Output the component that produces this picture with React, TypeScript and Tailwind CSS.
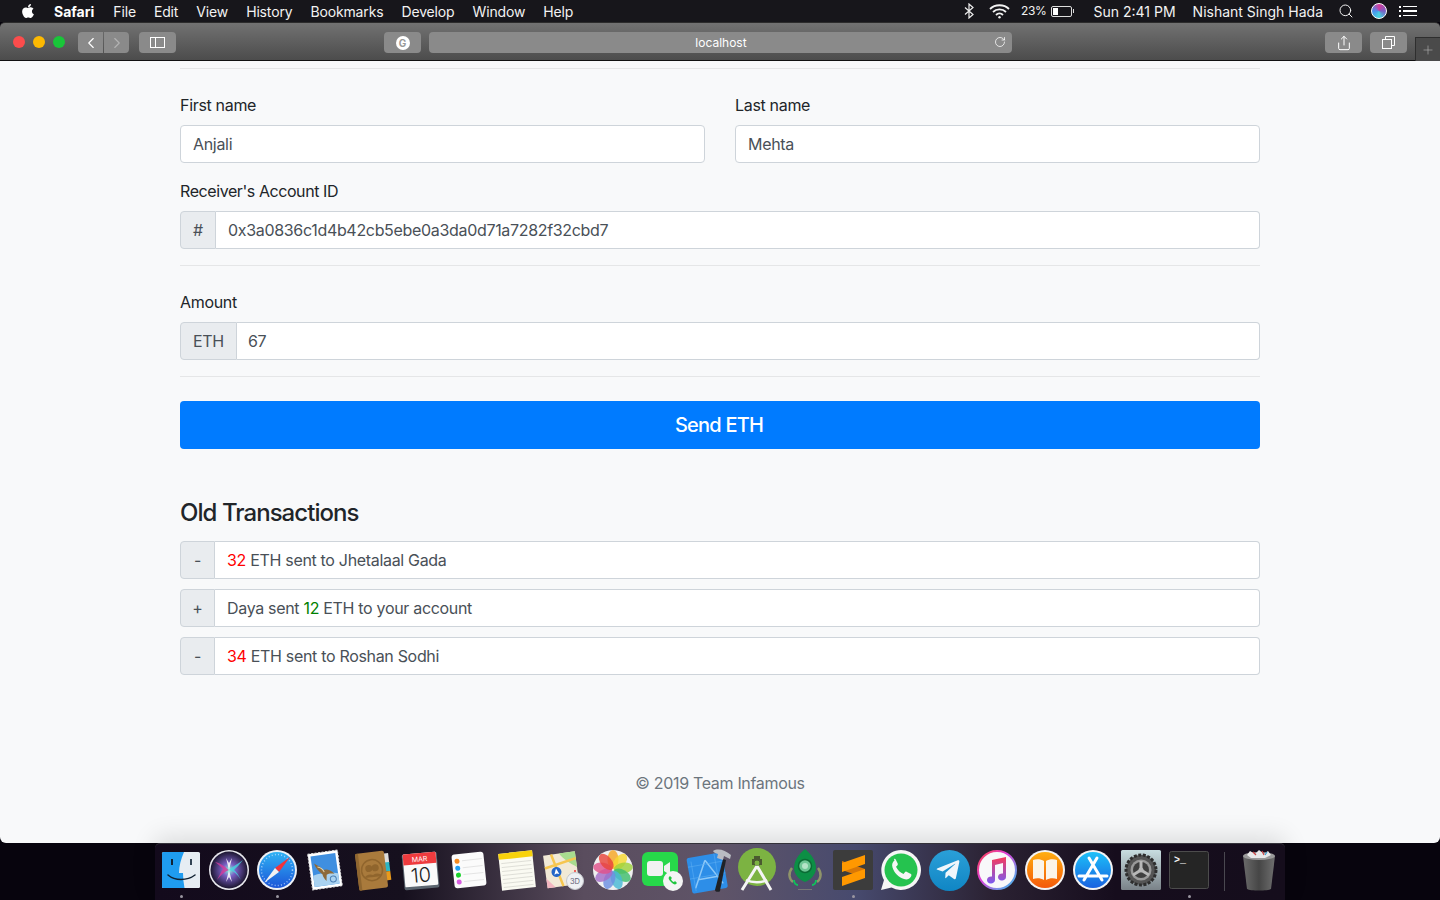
import React from "react";
import { FaApple, FaTelegramPlane } from "react-icons/fa";
import { Search, RotateCw, Share, ChevronLeft, ChevronRight, Plus } from "lucide-react";

const S = ({ children }: { children: React.ReactNode }) => (
  <svg width="48" height="48" viewBox="0 0 48 48" className="block">{children}</svg>
);

const Finder = () => (
  <S>
    <rect x="5" y="6" width="38" height="36" rx="1.5" fill="#e6edf3" />
    <path d="M6.500 6H27c-3 7-5 14-5 21h4c0 5 .5 10 1.500 15H6.500A1.500 1.500 0 0 1 5 40.500v-33A1.500 1.500 0 0 1 6.500 6z" fill="#1f9cf0" />
    <rect x="14" y="13" width="2" height="6" fill="#123" />
    <rect x="33" y="13" width="2" height="6" fill="#345" />
    <path d="M11 29c7 6 19 6 27 0" fill="none" stroke="#123" strokeWidth="1.500" strokeLinecap="round" />
  </S>
);
const Siri = () => (
  <S>
    <defs>
      <radialGradient id="sg"><stop offset="0" stopColor="#8fd" /><stop offset=".35" stopColor="#7a5fc4" /><stop offset="1" stopColor="#1c1630" /></radialGradient>
    </defs>
    <circle cx="24" cy="24" r="20" fill="#e8e8ee" />
    <circle cx="24" cy="24" r="18.500" fill="url(#sg)" />
    <path d="M10 16c8 2 11 6 14 8-5 2-9 6-12 10 3-6 5-10 6-11-2-2-5-5-8-7z" fill="#d43a9a" opacity=".8" />
    <path d="M38 14c-5 4-10 6-14 10 5 1 9 5 12 10-4-8-6-9-7-10 3-3 6-6 9-10z" fill="#46d6e0" opacity=".8" />
    <path d="M24 24l-3 12 3-5 3 5z M24 24l-3-12 3 5 3-5z" fill="#fff" opacity=".85" />
  </S>
);
const Safari = () => (
  <S>
    <defs>
      <linearGradient id="sf" x1="0" y1="0" x2="0" y2="1"><stop offset="0" stopColor="#2fb2f4" /><stop offset="1" stopColor="#1b55d8" /></linearGradient>
    </defs>
    <circle cx="24" cy="24" r="20" fill="#eef1f5" />
    <circle cx="24" cy="24" r="18" fill="url(#sf)" />
    <circle cx="24" cy="24" r="15.500" fill="none" stroke="#cfe6ff" strokeWidth="1.500" strokeDasharray="1 2.200" opacity=".7" />
    <path d="M37 11L22 22l4 4z" fill="#f2333a" />
    <path d="M11 37l15-11-4-4z" fill="#f2f2f2" />
  </S>
);
const Mail = () => (
  <S>
    <g transform="rotate(-8 24 24)">
      <rect x="9" y="6" width="30" height="36" fill="#fff" stroke="#ddd" strokeDasharray="2 1.500" strokeWidth="1" />
      <rect x="11.500" y="8.500" width="25" height="31" fill="#3f8fe0" />
      <path d="M11.500 28c8-2 17-1 25 1v10.500h-25z" fill="#a9d2f0" />
      <path d="M14 16c4 3 7 5 8 8 3-1 7 0 11 5-4-1-6-1-8 0l-1 6c-2-3-3-5-3-7-3-3-6-7-7-12z" fill="#8d6a3a" />
      <path d="M17 20c3 1 5 3 6 6" stroke="#e8d9b0" strokeWidth="1" fill="none" />
      <circle cx="31" cy="34" r="3" fill="none" stroke="#4a7fb5" />
    </g>
  </S>
);
const Contacts = () => (
  <S>
    <g transform="rotate(-7 24 24)">
      <rect x="35" y="9" width="6" height="10" fill="#ddd" />
      <rect x="36" y="18" width="5" height="9" fill="#2db6c6" />
      <rect x="36" y="27" width="5" height="9" fill="#e89a1d" />
      <rect x="8" y="6" width="29" height="37" rx="2" fill="#a97a3c" />
      <rect x="8" y="6" width="3" height="37" rx="1" fill="#8f6630" />
      <circle cx="23" cy="24" r="10.500" fill="none" stroke="#90652d" strokeWidth="1.500" />
      <circle cx="20" cy="22" r="3.500" fill="#90652d" />
      <circle cx="26.500" cy="22" r="3.500" fill="#90652d" />
      <path d="M15 31c1-4 9-4 10 0zM22 31c1-4 9-4 10 0z" fill="#90652d" />
    </g>
  </S>
);
const Calendar = () => (
  <S>
    <g transform="rotate(-5 24 24)">
      <rect x="6" y="7" width="35" height="36" rx="2" fill="#5c6670" />
      <rect x="7" y="7" width="33" height="33" rx="1" fill="#fafafa" />
      <path d="M7 8a1 1 0 0 1 1-1h31a1 1 0 0 1 1 1v10H7z" fill="#ee3b3e" />
      <text x="23.500" y="15.500" textAnchor="middle" fontSize="7" fill="#fff" fontFamily="Inter, sans-serif">MAR</text>
      <text x="23.500" y="36" textAnchor="middle" fontSize="20" fill="#222" fontFamily="Inter, sans-serif" fontWeight="300">10</text>
    </g>
  </S>
);
const Reminders = () => (
  <S>
    <g transform="rotate(-6 24 24)">
      <rect x="8" y="7" width="32" height="34" rx="3" fill="#fbfbfb" />
      <path d="M18 14h20M18 21h20M18 28h20M18 35h20" stroke="#e4e4e4" strokeWidth="1" />
      <circle cx="13" cy="14" r="2.500" fill="#f58a1f" />
      <circle cx="13" cy="21" r="2.500" fill="#1d9df3" />
      <circle cx="13" cy="28" r="2.500" fill="#19d22b" />
      <circle cx="13" cy="35" r="2.500" fill="#d85fe0" />
    </g>
  </S>
);
const Notes = () => (
  <S>
    <g transform="rotate(-6 24 24)">
      <rect x="7" y="6" width="34" height="37" fill="#fafaf2" />
      <rect x="7" y="6" width="34" height="6" fill="#f8d20c" />
      <path d="M9 16h30M9 20h30M9 24h30M9 28h30M9 32h30M9 36h30M9 40h30" stroke="#d9d9d2" strokeWidth=".8" />
    </g>
  </S>
);
const Maps = () => (
  <S>
    <g transform="rotate(-8 22 22)">
      <rect x="4" y="7" width="32" height="33" fill="#f1e9d6" />
      <path d="M20 7h16v16C30 18 24 14 20 7z" fill="#a8dc8f" />
      <path d="M4 30l8 10H4z" fill="#f2b5c0" />
      <path d="M12 7l8 33M4 20l32-6" stroke="#f6c64f" strokeWidth="2.500" />
      <circle cx="15" cy="25" r="5" fill="#2467c8" />
      <path d="M15 21.500l2.500 6-2.500-1-2.500 1z" fill="#fff" />
    </g>
    <circle cx="34" cy="35" r="8.500" fill="#eef0f3" stroke="#c5c8cd" />
    <text x="34" y="38" textAnchor="middle" fontSize="7.500" fill="#667" fontFamily="Inter, sans-serif">3D</text>
    <circle cx="34" cy="25" r="1" fill="#e33" />
  </S>
);
const Photos = () => {
  const c = ["#f5a623", "#f7d830", "#9ed23a", "#3ebd6c", "#48b8d4", "#6c8fe0", "#a46cc8", "#e0508a", "#e8443a"];
  return (
    <S>
      <circle cx="24" cy="24" r="20" fill="#f0f0f0" />
      {c.map((col, i) => (
        <ellipse key={col} cx="24" cy="13.500" rx="5.500" ry="9.500" fill={col} opacity=".82" transform={`rotate(${i * 40} 24 24)`} />
      ))}
    </S>
  );
};
const FaceTime = () => (
  <S>
    <rect x="5" y="6" width="36" height="34" rx="6" fill="#27d84a" />
    <rect x="10" y="15" width="16" height="15" rx="3" fill="#f1f1f1" />
    <path d="M27 20l6-4v13l-6-4z" fill="#f1f1f1" />
    <circle cx="36" cy="35" r="10" fill="#f4f4f4" />
    <path d="M32 31c-1 1 0 3 2 5s4 3 5 2l1-1-2-2-1 1c-1 0-3-2-3-3l1-1-2-2z" fill="#1fc63e" />
  </S>
);
const Xcode = () => (
  <S>
    <g transform="rotate(-10 22 26)">
      <rect x="4" y="9" width="36" height="36" rx="2" fill="#2d8ee8" />
      <path d="M8 40L22 14M36 40L22 14M12 32h20" stroke="#8cc8f8" strokeWidth="1.500" fill="none" />
      <path d="M8 13v30M4 18h36M4 30h36M32 9v36" stroke="#5fb0f4" strokeWidth=".5" />
    </g>
    <path d="M30 44l8-31 3 1-6 31c-1 1.500-5 1-5-1z" fill="#1f2226" />
    <path d="M28 5c5-3 12-1 18 4l-1 4-6-3-1 4-6-2 1-4c-2-1-4-1-5-3z" fill="#b9bcc2" />
  </S>
);
const AndroidStudio = () => (
  <S>
    <circle cx="24" cy="21" r="19" fill="#7cb342" />
    <path d="M21 10h6v3h2v6h-10v-6h2z" fill="#4a5a30" />
    <circle cx="24" cy="17" r="3" fill="#7cb342" stroke="#4a5a30" />
    <path d="M24 20L9 44M24 20l14 24" stroke="#f5f5f5" strokeWidth="3" fill="none" />
    <path d="M13 34c6 3 16 3 21 0" stroke="#f5f5f5" strokeWidth="2.500" fill="none" />
  </S>
);
const Rocket = () => (
  <S>
    <path d="M24 3c7 6 11 12 11 19 0 6-5 12-11 14-6-2-11-8-11-14 0-7 4-13 11-19z" fill="#0c8f45" />
    <circle cx="24" cy="20" r="6.500" fill="#6fc695" stroke="#0b6b34" strokeWidth="1.500" />
    <circle cx="24" cy="20" r="3" fill="#b4e4c7" />
    <path d="M11 22c-4 5-3 11 1 14M37 22c4 5 3 11-1 14" stroke="#8f9469" strokeWidth="2.500" fill="none" />
    <path d="M13 34c0 3 2 5 4 5M35 34c0 3-2 5-4 5" stroke="#0ec25c" strokeWidth="2" fill="none" />
    <rect x="17" y="43" width="14" height="1" fill="#777" />
  </S>
);
const Sublime = () => (
  <S>
    <rect x="4" y="4" width="40" height="40" rx="2" fill="#3c3c3c" />
    <path d="M13 15l23 8v9l-23-8z" fill="#d97706" />
    <path d="M36 9L13 17v9l23-8z" fill="#ff9800" />
    <path d="M36 23L13 31v9l23-8z" fill="#ff9800" />
  </S>
);
const Whatsapp = () => (
  <S>
    <path d="M24 4a20 20 0 1 1-9.500 37.600L4 44l3-10A20 20 0 0 1 24 4z" fill="#f6f6f6" />
    <circle cx="24" cy="24" r="16.500" fill="#25c34f" />
    <path d="M17.500 14.500c-2 1.500-3 4-2 7 1.500 5 6 10 11.500 11.500 3 1 5.500 0 7-2.500.5-1 .5-2 0-2.500l-4.500-2.300c-.7-.3-1.200 0-1.600.5l-1.400 1.800c-3-1-6-4-7.500-7.200l1.500-1.600c.4-.5.5-1 .2-1.600l-2-4.200c-.4-.7-1.200-.7-1.700-.2z" fill="#f6f6f6" />
  </S>
);
const Telegram = () => (
  <div className="w-12 h-12 flex items-center justify-center">
    <div className="w-[41px] h-[41px] rounded-full bg-gradient-to-b from-[#2a9fd8] to-[#0f86c4] flex items-center justify-center">
      <FaTelegramPlane className="text-[#f0f6fb] mr-[3px]" size={26} />
    </div>
  </div>
);
const Itunes = () => (
  <S>
    <defs>
      <linearGradient id="it" x1="0" y1="0" x2="1" y2="1"><stop offset="0" stopColor="#f44" /><stop offset=".4" stopColor="#e03ed8" /><stop offset="1" stopColor="#35c8f0" /></linearGradient>
      <linearGradient id="nt" x1="0" y1="0" x2="0" y2="1"><stop offset="0" stopColor="#f73a5c" /><stop offset="1" stopColor="#7a5cf0" /></linearGradient>
    </defs>
    <circle cx="24" cy="24" r="19" fill="#f8f8fa" stroke="url(#it)" strokeWidth="2" />
    <path d="M19 14l14-3v20a4 3.500 0 1 1-3-3.400V17l-8 2v15a4 3.500 0 1 1-3-3.400z" fill="url(#nt)" />
  </S>
);
const Books = () => (
  <S>
    <defs>
      <linearGradient id="bk" x1="0" y1="0" x2="0" y2="1"><stop offset="0" stopColor="#ffae10" /><stop offset="1" stopColor="#f4590a" /></linearGradient>
    </defs>
    <circle cx="24" cy="24" r="20" fill="#f4f4f4" />
    <circle cx="24" cy="24" r="18" fill="url(#bk)" />
    <path d="M23 15c-3-2-8-2-11-1v19c3-1 8-1 11 1zM25 15c3-2 8-2 11-1v19c-3-1-8-1-11 1z" fill="#fbf5ea" />
  </S>
);
const AppStore = () => (
  <S>
    <defs>
      <linearGradient id="as" x1="0" y1="0" x2="0" y2="1"><stop offset="0" stopColor="#1cc0f8" /><stop offset="1" stopColor="#1a62e0" /></linearGradient>
    </defs>
    <circle cx="24" cy="24" r="20" fill="#f4f4f4" />
    <circle cx="24" cy="24" r="18" fill="url(#as)" />
    <path d="M20 12l13 22M28 12L15 34M10 30h28" stroke="#fff" strokeWidth="3" strokeLinecap="round" fill="none" />
  </S>
);
const Prefs = () => (
  <S>
    <defs>
      <linearGradient id="pr" x1="0" y1="0" x2="0" y2="1"><stop offset="0" stopColor="#c8dde0" /><stop offset="1" stopColor="#7a8288" /></linearGradient>
    </defs>
    <rect x="4" y="4" width="40" height="40" rx="1.500" fill="url(#pr)" />
    <circle cx="24" cy="24" r="15" fill="#555" stroke="#2e2e2e" strokeWidth="3" strokeDasharray="3 1.500" />
    <circle cx="24" cy="24" r="10.500" fill="#9a9a9a" />
    <circle cx="24" cy="24" r="8" fill="#3f3f3f" />
    <path d="M24 24V15M24 24l8 5M24 24l-8 5" stroke="#b8b8b8" strokeWidth="3" />
    <circle cx="24" cy="24" r="2.500" fill="#b8b8b8" />
  </S>
);
const Terminal = () => (
  <S>
    <rect x="4.500" y="5.500" width="39" height="37" rx="2" fill="#252525" stroke="#4c4c4c" />
    <text x="9" y="17" fontSize="10" fontWeight="700" fill="#f2f2f2" fontFamily="Liberation Mono, monospace">&gt;_</text>
  </S>
);
const Trash = () => (
  <S>
    <defs>
      <linearGradient id="tr" x1="0" y1="0" x2="1" y2="0"><stop offset="0" stopColor="#6a6a6a" /><stop offset=".5" stopColor="#464646" /><stop offset="1" stopColor="#6f6f6f" /></linearGradient>
    </defs>
    <path d="M8 10h32l-4 33c-3 2-21 2-24 0z" fill="url(#tr)" />
    <ellipse cx="24" cy="10" rx="16" ry="4" fill="#9a9a9a" />
    <path d="M12 9l3-4 5 3 4-4 5 4 4-3 3 4-6 3H16z" fill="#e9e9e9" />
    <path d="M18 6l3 3M27 5l2 4" stroke="#c44" strokeWidth="1.200" />
    <path d="M32 6l-2 3" stroke="#39c" strokeWidth="1.200" />
  </S>
);

const dockItems: { c: React.ReactNode; dot?: boolean }[] = [
  { c: <Finder />, dot: true },
  { c: <Siri /> },
  { c: <Safari />, dot: true },
  { c: <Mail /> },
  { c: <Contacts /> },
  { c: <Calendar /> },
  { c: <Reminders /> },
  { c: <Notes /> },
  { c: <Maps /> },
  { c: <Photos /> },
  { c: <FaceTime /> },
  { c: <Xcode /> },
  { c: <AndroidStudio /> },
  { c: <Rocket /> },
  { c: <Sublime />, dot: true },
  { c: <Whatsapp /> },
  { c: <Telegram /> },
  { c: <Itunes /> },
  { c: <Books /> },
  { c: <AppStore /> },
  { c: <Prefs /> },
  { c: <Terminal />, dot: true },
];

const DockSlot = ({ children, dot }: { children: React.ReactNode; dot?: boolean }) => (
  <div className="w-12 shrink-0 flex flex-col items-center">
    {children}
    {dot && <div className="w-[3px] h-[3px] mt-[1px] rounded-full bg-[#9a96a0]" />}
  </div>
);

const menus = ["File", "Edit", "View", "History", "Bookmarks", "Develop", "Window", "Help"];

const btn = "h-[21px] bg-[#8a8a8a] rounded-[4px] flex items-center justify-center shrink-0";
const inputCls = "h-[38px] w-full bg-white border border-[#ced4da] rounded-[4px] px-[12px] text-[16px] text-[#495057] outline-none";
const hr = "border-t border-[#e5e6e7]";
const prepend = "h-[38px] bg-[#e9ecef] border border-[#ced4da] rounded-l-[4px] flex items-center justify-center text-[16px] text-[#495057] shrink-0";

const TxRow = ({ sign, children }: { sign: string; children: React.ReactNode }) => (
  <div className="flex">
    <div className={prepend + " w-[35px]"}>{sign}</div>
    <div className="h-[38px] flex-1 bg-white border border-l-0 border-[#ced4da] rounded-r-[4px] pl-[12px] flex items-center text-[16px] text-[#495057]">
      <span>{children}</span>
    </div>
  </div>
);

const ListRow = () => (
  <div className="w-full flex justify-between items-center">
    <div className="w-[2px] h-[2px] bg-white" />
    <div className="w-[14px] h-[1.5px] bg-white" />
  </div>
);

export default function App() {
  return (
    <div className="w-[1440px] h-[900px] overflow-hidden flex flex-col bg-[#07040d] font-['Inter',sans-serif]">
      <div className="h-[22px] bg-[#17161b] flex items-center text-[14px] text-[#f2f2f2] shrink-0">
        <FaApple className="ml-[20px] text-white" size={16} />
        <span className="ml-[18px] font-bold text-white">Safari</span>
        <div className="flex gap-[18px] ml-[19px] tracking-[-0.15px]">
          {menus.map((m) => (
            <span key={m}>{m}</span>
          ))}
        </div>
        <div className="ml-auto flex items-center">
          <svg width="10" height="16" viewBox="0 0 10 16" fill="none" stroke="#eee" strokeWidth="1.200">
            <path d="M1 4.500l8 7-4 3.500V1l4 3.500-8 7" />
          </svg>
          <svg width="21" height="15" viewBox="0 0 21 15" className="ml-[15px]" fill="none" stroke="#f2f2f2" strokeWidth="1.800">
            <path d="M1 5c5-5 14-5 19 0M4 8c3.500-3.500 9.500-3.500 13 0M7 11c2-2 5-2 7 0" />
            <circle cx="10.500" cy="13.300" r="1.200" fill="#f2f2f2" stroke="none" />
          </svg>
          <span className="ml-[11px] text-[12px] tracking-[-0.3px]">23%</span>
          <div className="ml-[4px] w-[21px] h-[11px] border border-[#ddd] rounded-[2px] p-[1px] shrink-0">
            <div className="w-[5px] h-full bg-white" />
          </div>
          <div className="w-[1px] h-[4px] bg-[#ddd] ml-[1px]" />
          <span className="ml-[20px]">Sun 2:41 PM</span>
          <span className="ml-[17px]">Nishant Singh Hada</span>
          <Search className="ml-[15px]" size={16} strokeWidth={1.5} />
          <div className="ml-[17px] w-[16px] h-[16px] rounded-full bg-[conic-gradient(#d43a9a,#7a5fc4,#46d6e0,#4a90f0,#d43a9a)] border border-white" />
          <div className="ml-[12px] mr-[23px] w-[18px] flex flex-col gap-[2.5px]">
            <ListRow />
            <ListRow />
            <ListRow />
          </div>
        </div>
      </div>

      <div className="h-[39px] shrink-0 bg-gradient-to-b from-[#727272] to-[#4c4c4c] border-t border-[#2c2c2c] border-b-[#111] border-b rounded-t-[5px] flex pt-[9px] text-white">
        <div className="w-[12px] h-[12px] rounded-full bg-[#fc4c4c] ml-[13px] mt-[4px]" />
        <div className="w-[12px] h-[12px] rounded-full bg-[#fdb901] ml-[8px] mt-[4px]" />
        <div className="w-[12px] h-[12px] rounded-full bg-[#19c639] ml-[8px] mt-[4px]" />
        <div className={btn + " w-[25px] ml-[13px] rounded-r-none"}>
          <ChevronLeft size={18} strokeWidth={1.5} />
        </div>
        <div className={btn + " w-[25px] ml-[1px] rounded-l-none"}>
          <ChevronRight size={18} strokeWidth={1.5} className="text-[#b3b3b3]" />
        </div>
        <div className={btn + " w-[37px] ml-[10px]"}>
          <div className="w-[15px] h-[11px] border border-white flex">
            <div className="w-[5px] border-r border-white" />
          </div>
        </div>
        <div className={btn + " w-[37px] ml-[208px]"}>
          <div className="w-[14px] h-[14px] rounded-full bg-white flex items-center justify-center text-[10px] font-bold text-[#999] leading-none">G</div>
        </div>
        <div className={btn + " w-[583px] ml-[8px] relative text-[12px]"}>
          <span className="ml-[1px]">localhost</span>
          <RotateCw size={12} strokeWidth={1.5} className="absolute right-[6px] top-[4px]" />
        </div>
        <div className={btn + " w-[37px] ml-[313px]"}>
          <Share size={16} strokeWidth={1.5} />
        </div>
        <div className={btn + " w-[37px] ml-[8px]"}>
          <svg width="13" height="13" viewBox="0 0 13 13" fill="none" stroke="#fff" strokeWidth="1">
            <rect x=".5" y="3.500" width="9" height="9" />
            <path d="M3.500 3.500v-3h9v9h-3" />
          </svg>
        </div>
        <div className="w-[25px] h-[24px] ml-[8px] mt-[5px] bg-[#4a4a4a] border-l border-t border-[#2e2e2e] flex items-center justify-center">
          <Plus size={14} strokeWidth={1} className="text-[#bbb]" />
        </div>
      </div>

      <div className="flex-1 min-h-0 bg-[#f8f9fa] rounded-b-[6px] text-[#212529] text-[16px] tracking-[-0.32px]">
        <div className="w-[1080px] mx-auto pt-[7px]">
          <div className={hr} />
          <div className="flex gap-[30px] mt-[24px]">
            <div className="flex-1">
              <label className="block h-[24px] leading-[24px] mb-[8px]">First name</label>
              <input className={inputCls} readOnly value="Anjali" />
            </div>
            <div className="flex-1">
              <label className="block h-[24px] leading-[24px] mb-[8px]">Last name</label>
              <input className={inputCls} readOnly value="Mehta" />
            </div>
          </div>
          <label className="block h-[24px] leading-[24px] mt-[16px] mb-[8px] tracking-[-0.42px]">Receiver's Account ID</label>
          <div className="flex">
            <div className={prepend + " w-[36px]"}>#</div>
            <input className={inputCls + " rounded-l-none border-l-0 flex-1"} readOnly value="0x3a0836c1d4b42cb5ebe0a3da0d71a7282f32cbd7" />
          </div>
          <div className={hr + " mt-[16px]"} />
          <label className="block h-[24px] leading-[24px] mt-[24px] mb-[8px]">Amount</label>
          <div className="flex">
            <div className={prepend + " w-[57px]"}>ETH</div>
            <input className={inputCls + " rounded-l-none border-l-0 flex-1 pl-[11px]"} readOnly value="67" />
          </div>
          <div className={hr + " mt-[16px]"} />
          <button className="mt-[24px] w-full h-[48px] bg-[#007bff] rounded-[4px] text-white text-[20px] font-medium tracking-[-0.8px] pr-[2px]">Send ETH</button>
          <h4 className="mt-[49px] text-[24px] leading-[29px] font-medium tracking-[-0.95px]">Old Transactions</h4>
          <div className="mt-[14px] flex flex-col gap-[10px]">
            <TxRow sign="-"><span className="text-[#ff0000]">32</span> ETH sent to Jhetalaal Gada</TxRow>
            <TxRow sign="+">Daya sent <span className="text-[#008000]">12</span> ETH to your account</TxRow>
            <TxRow sign="-"><span className="text-[#ff0000]">34</span> ETH sent to Roshan Sodhi</TxRow>
          </div>
          <p className="mt-[96px] text-center text-[#6c757d] leading-[24px]">© 2019 Team Infamous</p>
        </div>
      </div>

      <div className="h-[57px] shrink-0 bg-[#07040d] flex justify-center">
        <div className="w-[1130px] h-[57px] flex px-[2px] pt-[2px] rounded-t-[5px] border-t border-[#34323a] shadow-[0_-6px_24px_rgba(0,0,0,0.12)] bg-[linear-gradient(90deg,#130a1c_0%,#16101e_22%,#5a4d5e_38%,#5f5468_50%,#474a6e_62%,#2b2233_74%,#160d1d_85%,#150d1c_100%)]">
          {dockItems.map((d, i) => (
            <DockSlot key={i} dot={d.dot}>{d.c}</DockSlot>
          ))}
          <div className="w-px h-[39px] bg-[#4a4850] ml-[11px] mt-[6px] shrink-0" />
          <div className="ml-[10px]">
            <DockSlot><Trash /></DockSlot>
          </div>
        </div>
      </div>
    </div>
  );
}
